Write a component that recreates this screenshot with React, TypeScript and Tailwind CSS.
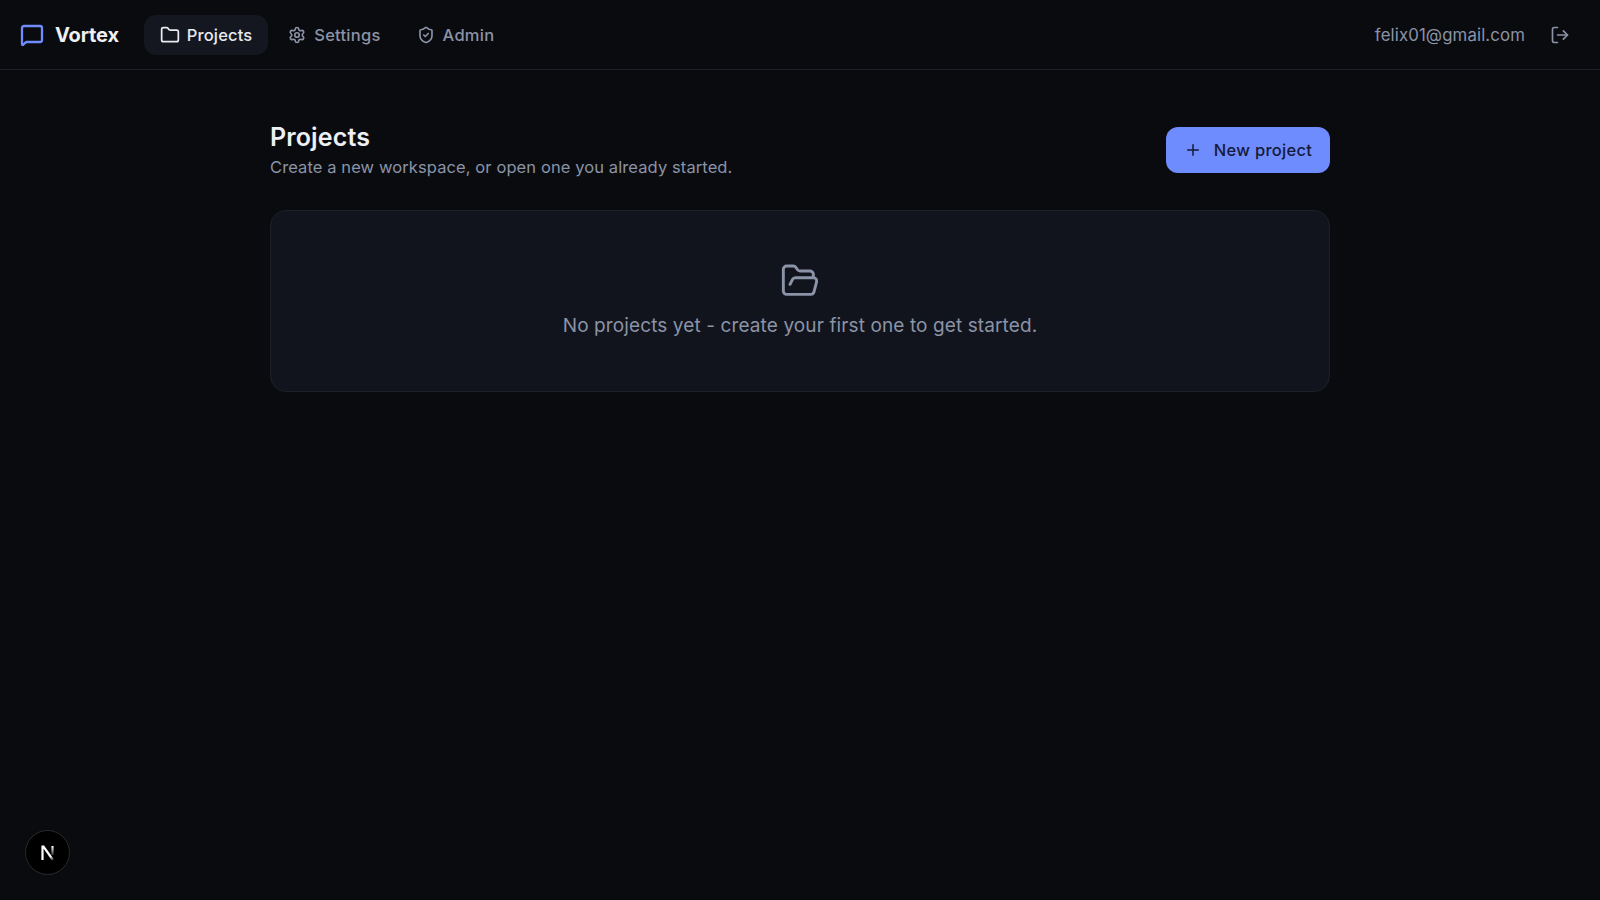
import { FolderOpen, Folder, LogOut, MessageSquare, Plus, Settings, ShieldCheck } from "lucide-react";

function NavItem({ icon, label, active }: { icon: React.ReactNode; label: string; active?: boolean }) {
  return (
    <a
      className={
        active
          ? "flex h-10 items-center gap-[7px] rounded-xl bg-[#141720] px-4 text-[16.5px] leading-[25px] font-medium tracking-[0.13px] text-[#e8eaf0]"
          : "flex h-10 items-center gap-2 rounded-xl px-4 text-[16.5px] leading-[25px] font-medium tracking-[0.25px] text-[#8b93a7]"
      }
    >
      {icon}
      <span className="pt-px">{label}</span>
    </a>
  );
}

export default function App() {
  return (
    <div className="relative flex h-[900px] flex-col overflow-hidden bg-[#0a0b0f] font-['Inter',sans-serif]">
      <header className="flex h-[70px] items-center justify-between border-b border-[#1e2028] pl-5 pr-[22px]">
        <div className="flex items-center">
          <div className="flex items-center gap-[11px]">
            <MessageSquare className="h-6 w-6 text-[#6f8cff]" strokeWidth={2.3} />
            <span className="text-xl font-bold tracking-[-0.15px] text-[#eef0f5]">Vortex</span>
          </div>
          <nav className="ml-[25px] flex items-center gap-1">
            <NavItem active label="Projects" icon={<Folder className="h-5 w-5" strokeWidth={2.1} />} />
            <NavItem label="Settings" icon={<Settings className="h-[18px] w-[18px]" strokeWidth={2.2} />} />
            <NavItem label="Admin" icon={<ShieldCheck className="h-[18px] w-[18px]" strokeWidth={2.2} />} />
          </nav>
        </div>
        <div className="flex items-center gap-[17px]">
          <span className="pt-px text-[16.8px] leading-[25px] tracking-[0.12px] text-[#8b93a7]">felix01@gmail.com</span>
          <button className="flex h-9 w-9 items-center justify-center text-[#8b93a7]">
            <LogOut className="h-5 w-5" strokeWidth={2} />
          </button>
        </div>
      </header>

      <main className="mx-auto w-[1060px] pt-[51px]">
        <div className="flex items-center justify-between">
          <div>
            <h1 className="text-[25px] leading-[32px] font-semibold tracking-[0.13px] text-[#eef0f5]">Projects</h1>
            <p className="mt-[2px] text-[16.5px] leading-6 tracking-[0.1px] text-[#8b93a7]">
              Create a new workspace, or open one you already started.
            </p>
          </div>
          <button className="flex h-[46px] w-[164px] items-center justify-center gap-3 rounded-xl bg-[#6f8cff] text-[16.5px] font-medium tracking-[0.3px] text-[#141a38]">
            <Plus className="h-[18px] w-[18px]" strokeWidth={2} />
            New project
          </button>
        </div>

        <div className="mt-[31px] flex h-[182px] flex-col items-center justify-center rounded-2xl border border-[#1e2028] bg-[#11141c] pb-[2px]">
          <FolderOpen className="h-10 w-10 text-[#8b93a7]" strokeWidth={1.75} />
          <p className="mt-[11px] text-[19px] leading-7 tracking-[0.11px] text-[#8b93a7]">
            No projects yet - create your first one to get started.
          </p>
        </div>
      </main>

      <div className="absolute bottom-[25px] left-[25px] flex h-[45px] w-[45px] items-center justify-center rounded-full border border-[#2a2a2e] bg-black">
        <svg width="18" height="18" viewBox="0 0 18 18" fill="none">
          <defs>
            <linearGradient id="n-stem" x1="0" y1="2" x2="0" y2="11" gradientUnits="userSpaceOnUse">
              <stop offset="0" stopColor="#ffffff" />
              <stop offset="1" stopColor="#ffffff" stopOpacity="0.2" />
            </linearGradient>
            <linearGradient id="n-diag" x1="5" y1="4" x2="14" y2="16" gradientUnits="userSpaceOnUse">
              <stop offset="0" stopColor="#ffffff" />
              <stop offset="0.7" stopColor="#ffffff" />
              <stop offset="1" stopColor="#ffffff" stopOpacity="0.2" />
            </linearGradient>
          </defs>
          <path d="M3.5 16V2.5h1L14 16" stroke="url(#n-diag)" strokeWidth="2.2" />
          <rect x="12.4" y="2" width="2.2" height="9" fill="url(#n-stem)" />
        </svg>
      </div>
    </div>
  );
}
